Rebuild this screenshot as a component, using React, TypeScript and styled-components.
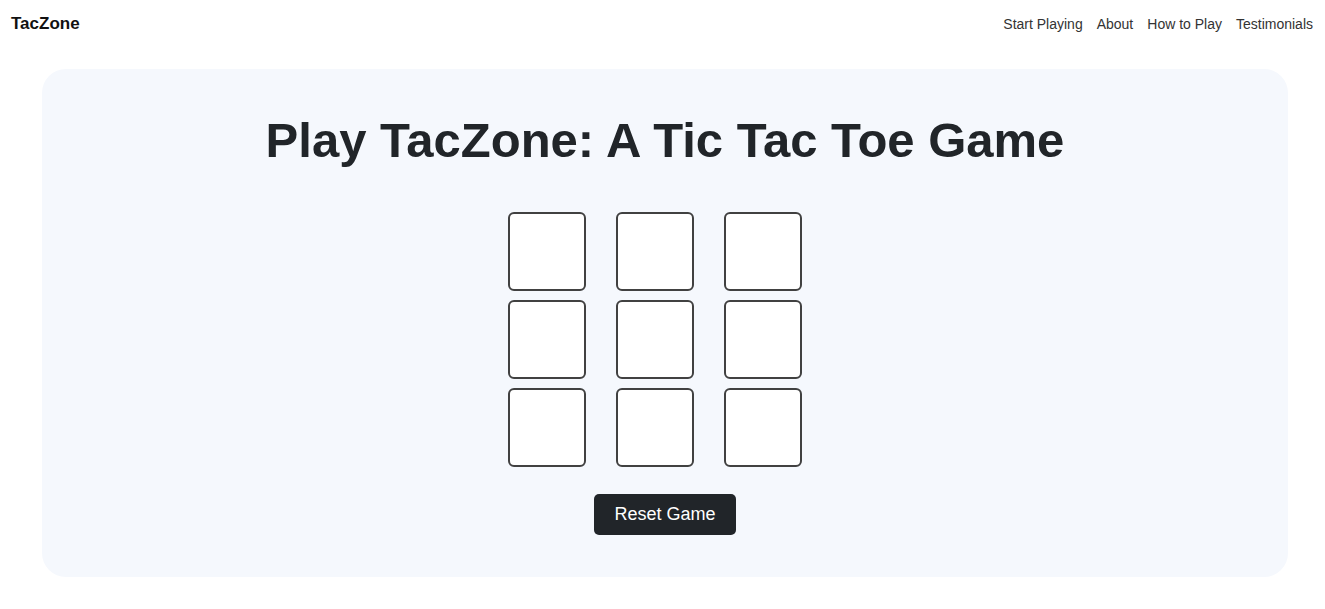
import React, { useState } from 'react'
import styled, { createGlobalStyle } from 'styled-components'

const GlobalStyle = createGlobalStyle`
	body {
		margin: 0;
		background: #ffffff;
		font-family: 'Liberation Sans', Arial, sans-serif;
		color: #212529;
	}
`

const Header = styled.header`
	height: 47px;
	padding: 1px 12px 0 11px;
	box-sizing: border-box;
	display: flex;
	align-items: center;
	justify-content: space-between;
`

const Logo = styled.div`
	font-size: 17px;
	font-weight: 700;
	color: #111;
`

const Nav = styled.nav`
	display: flex;
	gap: 14px;

	a {
		font-size: 14px;
		color: #333;
		text-decoration: none;
		cursor: pointer;
	}
`

const Card = styled.section`
	margin: 22px 37px 0 42px;
	height: 508px;
	box-sizing: border-box;
	padding-top: 45px;
	background: #f5f8fd;
	border-radius: 24px;
	display: flex;
	flex-direction: column;
	align-items: center;
`

const Title = styled.h1`
	margin: 0;
	font-size: 49px;
	line-height: 1.1;
	font-weight: 700;
	color: #212529;
`

const Board = styled.div`
	margin-top: 44px;
	margin-right: 20px;
	display: grid;
	grid-template-columns: repeat(3, 78px);
	grid-auto-rows: 79px;
	column-gap: 30px;
	row-gap: 9px;
`

const Cell = styled.button`
	box-sizing: border-box;
	width: 78px;
	height: 79px;
	padding: 0;
	background: #ffffff;
	border: 2px solid #414141;
	border-radius: 6px;
	font-family: inherit;
	font-size: 40px;
	font-weight: 700;
	color: #212529;
	cursor: pointer;
`

const ResetButton = styled.button`
	margin-top: 27px;
	width: 142px;
	height: 41px;
	background: #212529;
	color: #ffffff;
	border: none;
	border-radius: 5px;
	font-family: inherit;
	font-size: 18px;
	cursor: pointer;
`

export default function App() {
	const [cells, setCells] = useState<string[]>(Array(9).fill(''))
	const [turn, setTurn] = useState<'X' | 'O'>('X')

	const play = (i: number) => {
		if (cells[i]) return
		const next = [...cells]
		next[i] = turn
		setCells(next)
		setTurn(turn === 'X' ? 'O' : 'X')
	}

	return (
		<>
			<GlobalStyle />
			<Header>
				<Logo>TacZone</Logo>
				<Nav>
					<a>Start Playing</a>
					<a>About</a>
					<a>How to Play</a>
					<a>Testimonials</a>
				</Nav>
			</Header>
			<Card>
				<Title>Play TacZone: A Tic Tac Toe Game</Title>
				<Board>
					{cells.map((c, i) => (
						<Cell key={i} onClick={() => play(i)}>
							{c}
						</Cell>
					))}
				</Board>
				<ResetButton
					onClick={() => {
						setCells(Array(9).fill(''))
						setTurn('X')
					}}
				>
					Reset Game
				</ResetButton>
			</Card>
		</>
	)
}
